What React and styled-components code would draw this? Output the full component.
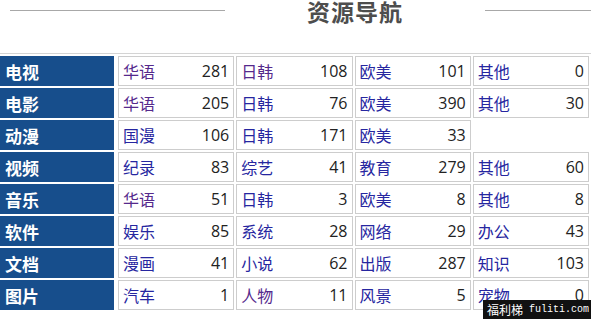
import React from 'react'
import styled, { createGlobalStyle } from 'styled-components'

const Global = createGlobalStyle`
    body {
        margin: 0;
        background: #fff;
        font-family: "Noto Sans", "Noto Sans CJK SC", sans-serif;
    }
`

const Page = styled.div`
    position: relative;
    width: 591px;
    height: 319px;
    overflow: hidden;
`

const Header = styled.div`
    display: flex;
    align-items: flex-start;
    height: 53px;
    padding-left: 10px;
`

const Line = styled.div`
    height: 1px;
    margin-top: 10px;
    background: #a8a8a8;
    width: ${p => p.$w ? p.$w + 'px' : 'auto'};
    flex: ${p => p.$w ? 'none' : '1'};
`

const Title = styled.h2`
    margin: -2px 82px 0;
    font-family: "Noto Sans CJK SC", sans-serif;
    font-size: 23px;
    line-height: 26px;
    font-weight: 700;
    color: #4d4d4d;
    letter-spacing: 1px;
`

const Table = styled.div`
    border-top: 1px solid #d4d4d4;
    padding: 2px 2px 0 0;
    display: grid;
    grid-template-columns: 116px repeat(4, 1fr);
    grid-auto-rows: 30px;
    row-gap: 2px;
    column-gap: 2px;
`

const Label = styled.div`
    background: #174e8c;
    color: #fff;
    font-family: "Noto Sans CJK SC", sans-serif;
    font-weight: 700;
    font-size: 17px;
    display: flex;
    align-items: center;
    padding-left: 5px;
    margin-right: 2px;
`

const Cell = styled.div`
    border: 1px solid #cdcdcd;
    display: flex;
    align-items: center;
    justify-content: space-between;
    padding: 0 4px 0 4px;
    font-size: 16px;
`

const Name = styled.a`
    color: ${p => p.$visited ? '#55298c' : '#2626a0'};
    text-decoration: none;
    font-family: "Noto Sans CJK SC", sans-serif;
`

const Count = styled.span`
    color: #222;
    font-family: "Open Sans", "Noto Sans", sans-serif;
`

const Mark = styled.div`
    position: absolute;
    right: 0;
    bottom: 0;
    width: 108px;
    height: 19px;
    box-sizing: border-box;
    padding-left: 4px;
    background: #111;
    color: #fff;
    display: flex;
    align-items: center;
    gap: 6px;
    font-size: 12px;
    font-family: "Noto Sans CJK SC", sans-serif;

    span {
        font-family: "Liberation Mono", monospace;
        font-size: 10px;
    }
`

const rows = [
    ['电视', [['华语', 281, 1], ['日韩', 108, 1], ['欧美', 101], ['其他', 0]]],
    ['电影', [['华语', 205, 1], ['日韩', 76], ['欧美', 390], ['其他', 30]]],
    ['动漫', [['国漫', 106], ['日韩', 171], ['欧美', 33]]],
    ['视频', [['纪录', 83], ['综艺', 41], ['教育', 279], ['其他', 60]]],
    ['音乐', [['华语', 51, 1], ['日韩', 3], ['欧美', 8], ['其他', 8]]],
    ['软件', [['娱乐', 85], ['系统', 28], ['网络', 29], ['办公', 43]]],
    ['文档', [['漫画', 41], ['小说', 62], ['出版', 287], ['知识', 103]]],
    ['图片', [['汽车', 1], ['人物', 11, 1], ['风景', 5], ['宠物', 0]]],
]

export default function App() {
    return (
        <Page>
            <Global />
            <Header>
                <Line $w={215} />
                <Title>资源导航</Title>
                <Line />
            </Header>
            <Table>
                {rows.map(([label, items]) => (
                    <React.Fragment key={label}>
                        <Label>{label}</Label>
                        {items.map(([name, n, v]) => (
                            <Cell key={name}>
                                <Name href="#" $visited={!!v}>{name}</Name>
                                <Count>{n}</Count>
                            </Cell>
                        ))}
                        {items.length < 4 && <div />}
                    </React.Fragment>
                ))}
            </Table>
            <Mark>福利梯<span>fuliti.com</span></Mark>
        </Page>
    )
}
